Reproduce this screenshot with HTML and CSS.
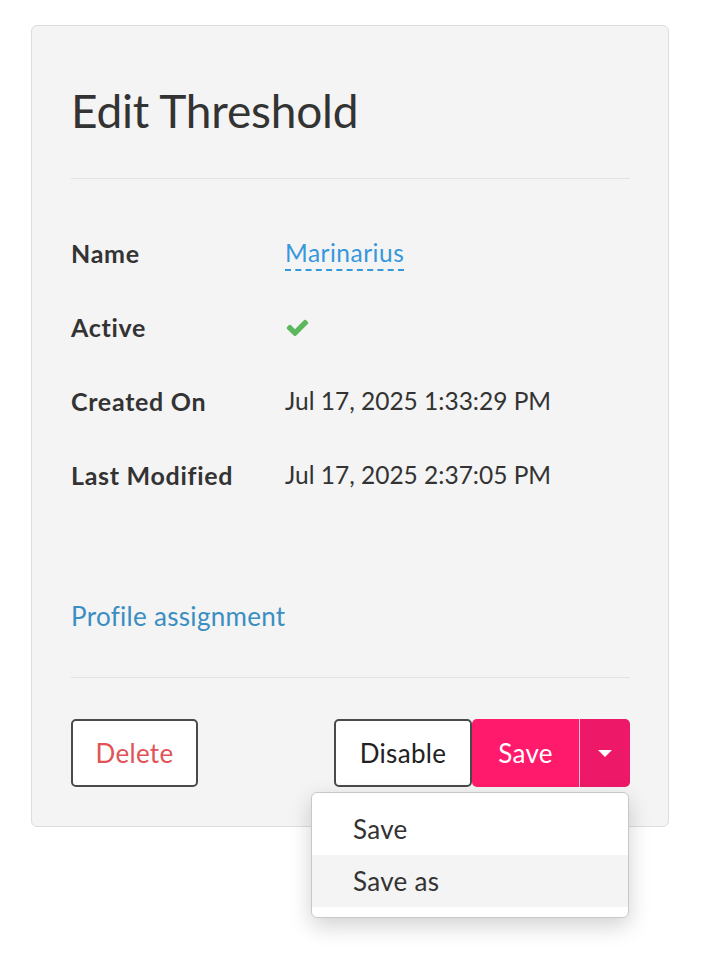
FILE: index.html
```html
<!DOCTYPE html>
<html lang="en">
<head>
<meta charset="utf-8">
<title>Edit Threshold</title>
<link rel="stylesheet" href="styles.css">
</head>
<body>
<div class="page">
  <section class="card">
    <h1 class="card-title">Edit Threshold</h1>
    <hr class="divider">
    <dl class="props">
      <div class="prop"><dt>Name</dt><dd><span class="editable">Marinarius</span></dd></div>
      <div class="prop"><dt>Active</dt><dd>
        <svg class="check" viewBox="0 0 1792 1792" aria-hidden="true"><path d="M1671 566q0 40-28 68l-724 724-136 136q-28 28-68 28t-68-28l-136-136-362-362q-28-28-28-68t28-68l136-136q28-28 68-28t68 28l294 295 656-657q28-28 68-28t68 28l136 136q28 28 28 68z"/></svg>
      </dd></div>
      <div class="prop"><dt>Created On</dt><dd>Jul 17, 2025 1:33:29 PM</dd></div>
      <div class="prop"><dt>Last Modified</dt><dd>Jul 17, 2025 2:37:05 PM</dd></div>
    </dl>
    <a class="profile-link" href="#">Profile assignment</a>
    <hr class="divider divider-bottom">
    <div class="actions">
      <button class="btn btn-delete" type="button">Delete</button>
      <div class="right-actions">
        <button class="btn btn-disable" type="button">Disable</button>
        <div class="split">
          <button class="btn btn-save" type="button">Save</button>
          <button class="btn btn-caret" type="button" aria-label="More"><span class="caret"></span></button>
          <ul class="menu">
            <li class="menu-item">Save</li>
            <li class="menu-item hover">Save as</li>
          </ul>
        </div>
      </div>
    </div>
  </section>
</div>
</body>
</html>
```
FILE: styles.css
```css
* { box-sizing: border-box; }
html, body {
  min-height: 100%;
}
body {
  margin: 0;
  min-height: 962px;
  background: #ffffff;
  font-family: "Source Sans Pro", Lato, "Liberation Sans", sans-serif;
  color: #333333;
}
.page {
  padding: 25px 0 136px 31px;
}
.card {
  width: 638px;
  background: #f4f4f4;
  border: 1px solid #dddddd;
  border-radius: 6px;
  padding: 57px 38px 39px 39px;
}
.card-title {
  margin: 0;
  font-size: 46px;
  line-height: 56px;
  font-weight: 400;
  color: #333333;
  letter-spacing: -0.2px;
}
.divider {
  border: 0;
  border-top: 1px solid #e3e3e3;
  margin: 39px 0 0 0;
  height: 0;
}
.props {
  margin: 37px 0 0 0;
}
.prop {
  display: grid;
  grid-template-columns: 214px 1fr;
  height: 74px;
  align-items: center;
  line-height: 30px;
}
.prop dt {
  font-size: 25px;
  font-weight: 700;
  letter-spacing: 0.7px;
  color: #333333;
}
.prop dd {
  margin: 0;
  font-size: 24.5px;
  color: #333333;
}
.editable {
  color: #3598dc;
  border-bottom: 2px dashed #3598dc;
  padding-bottom: 2px;
  letter-spacing: 0.5px;
}
.check {
  width: 25px;
  height: 25px;
  fill: #5cb85c;
  display: block;
}
.profile-link {
  display: block;
  margin-top: 89px;
  font-size: 26px;
  line-height: 30px;
  letter-spacing: 0.3px;
  color: #3a8ec2;
  text-decoration: none;
}
.divider-bottom {
  margin-top: 46px;
}
.actions {
  margin-top: 41px;
  display: flex;
  justify-content: space-between;
}
.right-actions {
  display: flex;
}
.btn {
  font-family: inherit;
  font-size: 26px;
  letter-spacing: 0.3px;
  height: 68px;
  border-radius: 5px;
  cursor: pointer;
}
.btn-delete {
  width: 127px;
  background: #ffffff;
  border: 2px solid #4a4a4a;
  color: #e05458;
}
.btn-disable {
  width: 138px;
  background: #ffffff;
  border: 2px solid #4a4a4a;
  color: #222222;
  border-radius: 5px;
}
.split {
  position: relative;
  display: flex;
}
.btn-save {
  width: 107px;
  background: #ff1a6c;
  border: 0;
  color: #ffffff;
  border-radius: 5px 0 0 5px;
}
.btn-caret {
  width: 51px;
  background: #ee1868;
  border: 0;
  border-left: 1px solid #f7c2d5;
  border-radius: 0 5px 5px 0;
  display: flex;
  align-items: center;
  justify-content: center;
  padding: 0;
}
.caret {
  width: 0;
  height: 0;
  border-left: 7px solid transparent;
  border-right: 7px solid transparent;
  border-top: 7px solid #ffffff;
}
.menu {
  position: absolute;
  top: 73px;
  right: 1px;
  width: 318px;
  margin: 0;
  padding: 10px 0;
  list-style: none;
  background: #ffffff;
  border: 1px solid #c8c8c8;
  border-radius: 6px;
  box-shadow: 0 8px 22px rgba(0, 0, 0, 0.18);
}
.menu-item {
  height: 52px;
  line-height: 52px;
  padding-left: 41px;
  font-size: 26px;
  letter-spacing: 0.3px;
  color: #333333;
}
.menu-item.hover {
  background: #f4f4f4;
}
```
